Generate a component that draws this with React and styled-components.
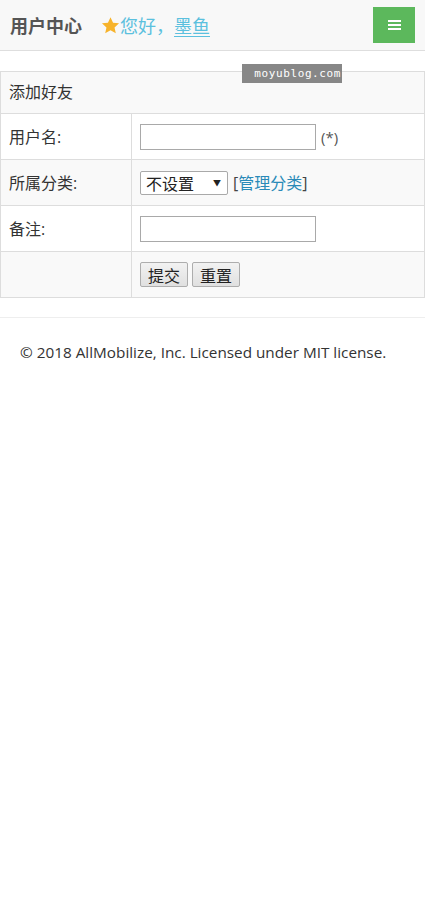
import React from "react";
import styled, { createGlobalStyle } from "styled-components";

const Global = createGlobalStyle`
  html, body { margin: 0; padding: 0; background: #fff; }
  body {
    font-family: "Open Sans", "Noto Sans CJK SC", sans-serif;
    color: #333;
    font-size: 16px;
  }
`;

const Page = styled.div`
  position: relative;
  width: 425px;
`;

const Header = styled.header`
  height: 51px;
  box-sizing: border-box;
  background: #f8f8f8;
  border-bottom: 1px solid #dedede;
  display: flex;
  align-items: center;
  padding: 0 10px;
`;

const Brand = styled.div`
  font-family: "Noto Sans CJK SC", sans-serif;
  font-weight: 700;
  font-size: 18px;
  color: #555;
  margin-right: 19px;
  line-height: 1;
`;

const Greeting = styled.div`
  font-family: "Noto Sans CJK SC", sans-serif;
  font-size: 18px;
  color: #5bc0de;
  display: flex;
  align-items: center;
  line-height: 1;
  flex: 1;
`;

const Star = styled.svg`
  width: 19px;
  height: 19px;
`;

const NameLink = styled.a`
  color: #5bc0de;
  text-decoration: underline;
  text-underline-offset: 3px;
`;

const MenuButton = styled.button`
  width: 42px;
  height: 36px;
  background: #5cb85c;
  border: none;
  border-radius: 0;
  display: flex;
  flex-direction: column;
  align-items: center;
  justify-content: center;
  gap: 2px;
  padding: 0;
`;

const Bar = styled.span`
  width: 13px;
  height: 2px;
  background: #fff;
`;

const Watermark = styled.div`
  position: absolute;
  left: 242px;
  top: 64px;
  width: 100px;
  height: 19px;
  background: #878787;
  color: #fff;
  font-family: "DejaVu Sans Mono", monospace;
  font-size: 11px;
  letter-spacing: 0.6px;
  display: flex;
  align-items: center;
  justify-content: flex-end;
  padding-right: 1px;
  box-sizing: border-box;
`;

const Table = styled.table`
  margin-top: 20px;
  width: 100%;
  border-collapse: collapse;
  border: 1px solid #ddd;
  font-family: "Open Sans", "Noto Sans CJK SC", sans-serif;
  font-size: 16px;
  line-height: 20px;
`;

const Row = styled.tr`
  background: ${(p) => (p.$striped ? "#f9f9f9" : "#fff")};
`;

const HeadCell = styled.th`
  text-align: left;
  font-weight: 400;
  padding: 10px 8px 11px;
  height: 20px;
  border: 1px solid #ddd;
`;

const LabelCell = styled.td`
  width: 114px;
  padding: 0 8px;
  height: 45px;
  border: 1px solid #ddd;
  vertical-align: middle;
`;

const FieldCell = styled.td`
  padding: 0 8px;
  border: 1px solid #ddd;
  vertical-align: middle;
`;

const Field = styled.div`
  display: flex;
  align-items: center;
  gap: 5px;
`;

const TextInput = styled.input`
  width: 176px;
  height: 26px;
  box-sizing: border-box;
  border: 1px solid #a9a9a9;
  background: #fff;
  margin: 0;
  padding: 2px 4px;
  font-size: 15px;
`;

const Hint = styled.span`
  color: #555;
  font-size: 15px;
`;

const SelectBox = styled.div`
  width: 88px;
  height: 24px;
  box-sizing: border-box;
  border: 1px solid #a9a9a9;
  border-radius: 2px;
  background: #fff;
  display: flex;
  align-items: center;
  justify-content: space-between;
  padding: 0 6px 0 5px;
  font-family: "Noto Sans CJK SC", sans-serif;
  font-size: 16px;
  line-height: 1;
  color: #222;
`;

const Caret = styled.span`
  font-size: 8px;
  color: #222;
`;

const Bracket = styled.span`
  color: #444;
  font-size: 16px;
`;

const ManageLink = styled.a`
  color: #2a8ab8;
  text-decoration: none;
  font-family: "Noto Sans CJK SC", sans-serif;
`;

const Buttons = styled.div`
  display: flex;
  gap: 4px;
`;

const FormButton = styled.button`
  width: 48px;
  height: 25px;
  box-sizing: border-box;
  border: 1px solid #adadad;
  border-radius: 2px;
  background: linear-gradient(#f2f2f2, #e0e0e0);
  font-family: "Noto Sans CJK SC", sans-serif;
  font-size: 16px;
  line-height: 1;
  color: #222;
  padding: 0;
  margin: 0;
`;

const Footer = styled.footer`
  margin-top: 19px;
  border-top: 1px solid #eee;
  padding: 24px 20px;
  font-family: "Open Sans", sans-serif;
  font-size: 15.3px;
  color: #333;
`;

export default function App() {
  return (
    <Page>
      <Global />
      <Header>
        <Brand>用户中心</Brand>
        <Greeting>
          <Star viewBox="0 0 24 24">
            <path
              fill="#f7b32b"
              d="M12 1.5l3.2 7 7.6.8-5.7 5.1 1.6 7.5L12 18l-6.7 3.9 1.6-7.5L1.2 9.3l7.6-.8z"
            />
          </Star>
          您好，<NameLink>墨鱼</NameLink>
        </Greeting>
        <MenuButton aria-label="menu">
          <Bar />
          <Bar />
          <Bar />
        </MenuButton>
      </Header>
      <Watermark>moyublog.com</Watermark>
      <Table>
        <tbody>
          <Row $striped>
            <HeadCell colSpan={2}>添加好友</HeadCell>
          </Row>
          <Row>
            <LabelCell>用户名:</LabelCell>
            <FieldCell>
              <Field>
                <TextInput />
                <Hint>(*)</Hint>
              </Field>
            </FieldCell>
          </Row>
          <Row $striped>
            <LabelCell>所属分类:</LabelCell>
            <FieldCell>
              <Field>
                <SelectBox>
                  不设置<Caret>▼</Caret>
                </SelectBox>
                <Bracket>
                  [<ManageLink>管理分类</ManageLink>]
                </Bracket>
              </Field>
            </FieldCell>
          </Row>
          <Row>
            <LabelCell>备注:</LabelCell>
            <FieldCell>
              <TextInput />
            </FieldCell>
          </Row>
          <Row $striped>
            <LabelCell />
            <FieldCell>
              <Buttons>
                <FormButton>提交</FormButton>
                <FormButton>重置</FormButton>
              </Buttons>
            </FieldCell>
          </Row>
        </tbody>
      </Table>
      <Footer>© 2018 AllMobilize, Inc. Licensed under MIT license.</Footer>
    </Page>
  );
}
